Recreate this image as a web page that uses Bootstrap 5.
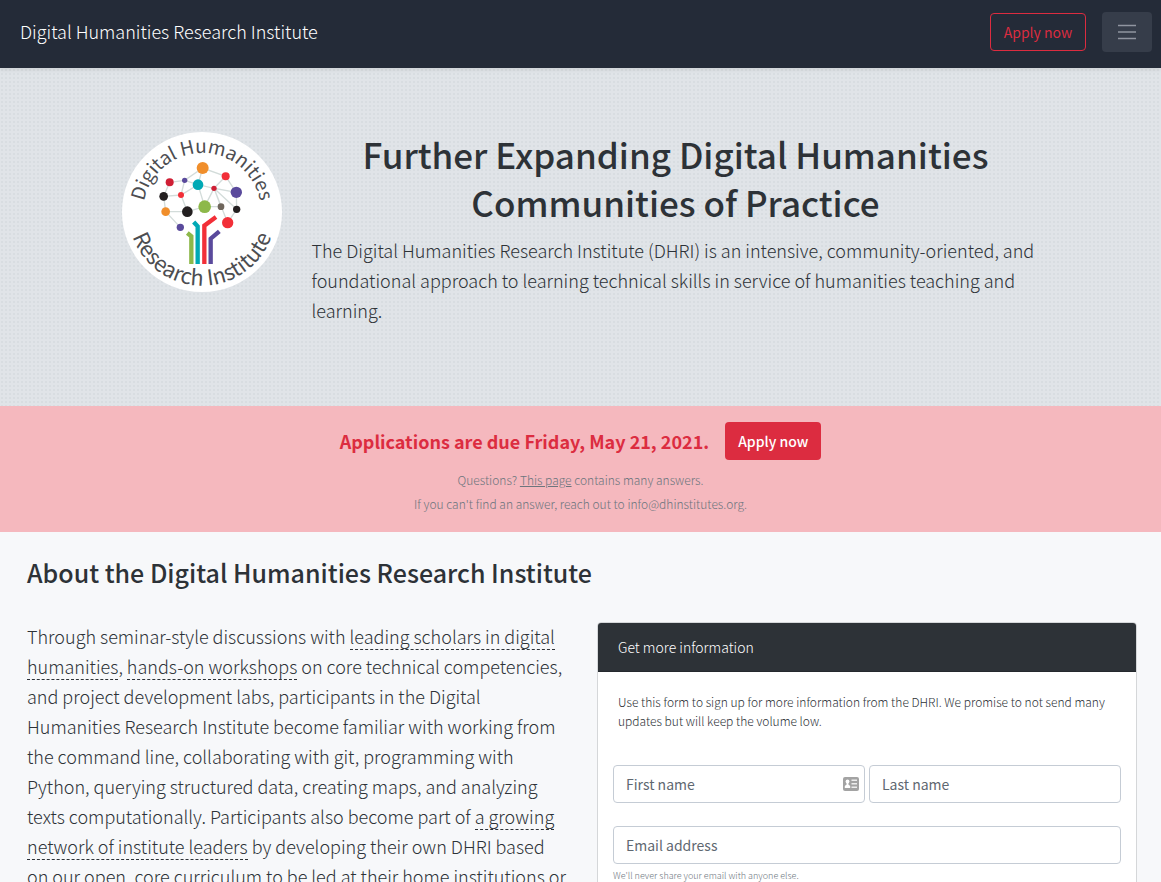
<!DOCTYPE html>
<html lang="en">
<head>
<meta charset="utf-8">
<meta name="viewport" content="width=device-width, initial-scale=1">
<title>Digital Humanities Research Institute</title>
<link href="https://cdn.jsdelivr.net/npm/bootstrap@5.3.0/dist/css/bootstrap.min.css" rel="stylesheet">
<style>
  :root { --ink: #2d3237; --slate: #6c757d; --crimson: #dc2c40; }
  body {
    font-family: "Noto Sans CJK SC", "Open Sans", sans-serif;
    font-weight: 300; font-size: 18px; line-height: 30px;
    color: var(--ink); background: #f7f8fa;
  }
  h1, h2 { font-weight: 500; color: var(--ink); }
  .site-nav { background: #242b38; min-height: 68px; padding: 12px 9px 15px 20px; box-shadow: 0 2px 4px rgba(0,0,0,.08); }
  .site-nav .navbar-brand { color: #fff; font-size: 18px; line-height: 30px; padding: 0; }
  .btn { font-size: 14px; line-height: 24px; padding: 6px 12px; border-radius: 4px; height: 38px; min-width: 96px; white-space: nowrap; }
  .btn-crimson, .btn-crimson:hover { background: var(--crimson); color: #fff; font-weight: 500; }
  .btn-line { border-color: var(--crimson); color: var(--crimson); font-weight: 400; }
  .menu-btn { background: #363d4a; border: 0; border-radius: 4px; width: 50px; height: 40px; }
  .hero {
    background-color: #e0e4e8;
    background-image: radial-gradient(circle, #d8dde1 1px, transparent 1px);
    background-size: 4px 4px;
    padding: 64px 16px 65px;
  }
  .hero-inner { max-width: 918px; gap: 30px; }
  .hero h1 { font-size: 35px; line-height: 48px; margin-top: -2px; margin-bottom: 9px; }
  .notice { background: #f5b8be; padding: 16px; }
  .notice strong { color: var(--crimson); font-weight: 700; }
  .notice p { font-size: 12px; line-height: 24px; color: var(--slate); }
  .notice a { color: var(--slate); }
  .about { padding: 23px 24px 24px 27px; }
  .about h2 { font-size: 25px; line-height: 34px; margin-bottom: 32px; }
  .about-cols { --bs-gutter-x: 30px; }
  .prose a { color: inherit; text-decoration: none; border-bottom: 1px dashed var(--ink); }
  .info-card { border-color: #d5d7d9; border-radius: 4px; margin-top: 1px; }
  .info-card .card-header { background: #2d3237; color: #fff; font-size: 14px; line-height: 24px; padding: 12px 20px; border-radius: 3px 3px 0 0; }
  .info-card .card-body { padding: 20px 15px; }
  .intro { font-size: 12px; line-height: 19px; padding: 0 5px; margin-bottom: 35px; }
  .info-card .form-control { font-size: 14px; line-height: 24px; height: 38px; padding: 6px 12px; border-color: #c5ccd5; border-radius: 4px; }
  .info-card .form-control::placeholder { color: #5f6871; font-weight: 400; opacity: 1; }
  .name-row { gap: 4px; margin-bottom: 23px; }
  .card-mark { top: 12px; right: 6px; }
  .hint { font-size: 9px; line-height: 14px; color: var(--slate); margin-top: 5px; }
</style>
</head>
<body>
<nav class="navbar site-nav position-relative z-1 d-flex align-items-start justify-content-between flex-nowrap">
  <a class="navbar-brand mt-1" href="#">Digital Humanities Research Institute</a>
  <div class="d-flex align-items-center gap-3">
    <button type="button" class="btn btn-line">Apply now</button>
    <button type="button" class="menu-btn d-flex align-items-center justify-content-center" aria-label="Toggle navigation">
      <svg width="20" height="16" viewBox="0 0 20 16" stroke="#9095a0" stroke-width="1.6"><path d="M1 1.500h18M1 8h18M1 14.500h18"/></svg>
    </button>
  </div>
</nav>

<header class="hero">
  <div class="hero-inner mx-auto d-flex align-items-start">
    <svg class="flex-shrink-0" width="160" height="160" viewBox="66 51 480 480" role="img" aria-label="Digital Humanities Research Institute logo">
      <defs>
        <path id="arcTop" d="M129 291a177 177 0 0 1 354 0"/>
        <path id="arcBottom" d="M85 291a221 221 0 0 0 442 0"/>
      </defs>
      <circle cx="306" cy="291" r="240" fill="#fff"/>
      <g fill="#4c4d51" font-weight="400" text-anchor="middle">
        <text font-size="57"><textPath href="#arcTop" startOffset="50%">Digital Humanities</textPath></text>
        <text font-size="65"><textPath href="#arcBottom" startOffset="50%">Research Institute</textPath></text>
      </g>
      <path fill="none" stroke="#d3dcda" stroke-width="4" d="M209 202L254 196L308 159L377 184L409 232L410 283L383 323M308 159L294 209L254 196L243 240L262 290L197 290L191 244L209 202M191 244L243 240L294 209L342 220L377 184M294 209L314 275L342 220L409 232M342 220L410 283M342 220L383 323M342 220L363 275L314 275L262 290M197 290L241 337"/>
      <circle cx="308" cy="159" r="18" fill="#f08e2b"/>
      <circle cx="377" cy="184" r="12" fill="#f22f38"/>
      <circle cx="254" cy="196" r="8" fill="#5a4a9c"/>
      <circle cx="209" cy="202" r="12" fill="#cf1f35"/>
      <circle cx="294" cy="209" r="16" fill="#00a9b5"/>
      <circle cx="342" cy="220" r="8" fill="#cf1f35"/>
      <circle cx="409" cy="232" r="17" fill="#5a4a9c"/>
      <circle cx="243" cy="240" r="9" fill="#f22f38"/>
      <circle cx="191" cy="244" r="13" fill="#231f20"/>
      <circle cx="314" cy="275" r="19" fill="#8db84a"/>
      <circle cx="363" cy="275" r="10" fill="#6f665c"/>
      <circle cx="410" cy="283" r="11" fill="#231f20"/>
      <circle cx="262" cy="290" r="16" fill="#231f20"/>
      <circle cx="197" cy="290" r="13" fill="#f08e2b"/>
      <circle cx="383" cy="323" r="17" fill="#f22f38"/>
      <circle cx="241" cy="337" r="11" fill="#5a4a9c"/>
      <g fill="none" stroke-width="13">
        <path stroke="#8db84a" d="M274 447V364L262 354"/>
        <path stroke="#00a9b5" d="M293 447V334L281 321"/>
        <path stroke="#f22f38" d="M313 447V332L348 306"/>
        <path stroke="#5a4a9c" d="M332 447V371L358 349"/>
      </g>
    </svg>
    <div class="flex-grow-1">
      <h1 class="text-center">Further Expanding Digital Humanities Communities of Practice</h1>
      <p class="mb-3">The Digital Humanities Research Institute (DHRI) is an intensive, community-oriented, and foundational approach to learning technical skills in service of humanities teaching and learning.</p>
    </div>
  </div>
</header>

<section class="notice text-center">
  <div class="d-flex justify-content-center align-items-center gap-3 mb-2">
    <strong>Applications are due Friday, May 21, 2021.</strong>
    <button type="button" class="btn btn-crimson">Apply now</button>
  </div>
  <p class="mb-0">Questions? <a href="#">This page</a> contains many answers.</p>
  <p class="mb-0">If you can't find an answer, reach out to info@dhinstitutes.org.</p>
</section>

<main class="about">
  <h2>About the Digital Humanities Research Institute</h2>
  <div class="row about-cols">
    <div class="col-6 prose">
      <p>Through seminar-style discussions with <a href="#">leading scholars in digital humanities</a>, <a href="#">hands-on workshops</a> on core technical competencies, and project development labs, participants in the Digital Humanities Research Institute become familiar with working from the command line, collaborating with git, programming with Python, querying structured data, creating maps, and analyzing texts computationally. Participants also become part of <a href="#">a growing network of institute leaders</a> by developing their own DHRI based on our open, core curriculum to be led at their home institutions or</p>
    </div>
    <div class="col-6">
      <form class="card info-card">
        <div class="card-header">Get more information</div>
        <div class="card-body">
          <p class="intro">Use this form to sign up for more information from the DHRI. We promise to not send many updates but will keep the volume low.</p>
          <div class="d-flex name-row">
            <div class="flex-fill position-relative">
              <input type="text" class="form-control" placeholder="First name" aria-label="First name">
              <svg class="card-mark position-absolute" width="16" height="14" viewBox="0 0 16 14"><rect width="16" height="14" rx="2" fill="#a3a3a3"/><g fill="#fff"><circle cx="4.500" cy="4.500" r="1.900"/><path d="M3.600 5h1.800v2.500l1.800 1.500v2H1.800V9l1.800-1.500z"/><path d="M8.500 2.500H14v1.500H8.500zM8.500 6H14v1.500H8.500zM8.500 9.500H14V11H8.500z" opacity=".8"/></g></svg>
            </div>
            <div class="flex-fill">
              <input type="text" class="form-control" placeholder="Last name" aria-label="Last name">
            </div>
          </div>
          <input type="email" class="form-control" placeholder="Email address" aria-label="Email address">
          <div class="hint">We'll never share your email with anyone else.</div>
        </div>
      </form>
    </div>
  </div>
</main>
<script src="https://cdn.jsdelivr.net/npm/bootstrap@5.3.0/dist/js/bootstrap.bundle.min.js"></script>
</body>
</html>
